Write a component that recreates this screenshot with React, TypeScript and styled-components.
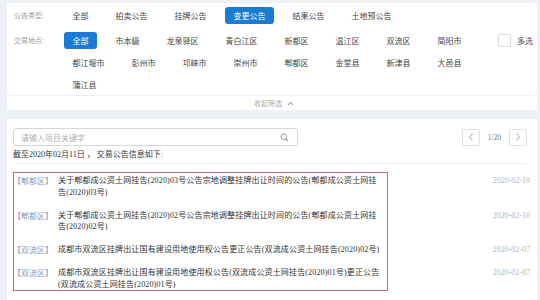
import React from 'react'
import styled, { createGlobalStyle } from 'styled-components'

const GlobalStyle = createGlobalStyle`
  body {
    margin: 0;
    background: #eef1f5;
    font-family: "Noto Sans CJK SC", sans-serif;
  }
`

const types = ['全部', '拍卖公告', '挂牌公告', '变更公告', '结果公告', '土地预公告']

const places = [
  '全部', '市本级', '龙泉驿区', '青白江区', '新都区', '温江区', '双流区', '简阳市',
  '都江堰市', '彭州市', '邛崃市', '崇州市', '郫都区', '金堂县', '新津县', '大邑县',
  '蒲江县',
]

const notices = [
  {
    area: '郫都区',
    lines: ['关于郫都成公资土网挂告(2020)03号公告宗地调整挂牌出让时间的公告(郫都成公资土网挂', '告(2020)03号)'],
    date: '2020-02-10',
  },
  {
    area: '郫都区',
    lines: ['关于郫都成公资土网挂告(2020)02号公告宗地调整挂牌出让时间的公告(郫都成公资土网挂', '告(2020)02号)'],
    date: '2020-02-10',
  },
  {
    area: '双流区',
    lines: ['成都市双流区挂牌出让国有建设用地使用权公告更正公告(双流成公资土网挂告(2020)02号)'],
    date: '2020-02-07',
  },
  {
    area: '双流区',
    lines: ['成都市双流区挂牌出让国有建设用地使用权公告(双流成公资土网挂告(2020)01号)更正公告', '(双流成公资土网挂告(2020)01号)'],
    date: '2020-02-07',
  },
]

export default function App() {
  return (
    <Page>
      <GlobalStyle />
      <FilterCard>
        <FilterBody>
          <FilterRow $gap={8}>
            <Label>公告类型:</Label>
            <Options>
              {types.map(t => (
                <Option key={t} $active={t === '变更公告'}>{t}</Option>
              ))}
            </Options>
          </FilterRow>
          <FilterRow>
            <Label>交易地点:</Label>
            <Options>
              {places.map((p, i) => (
                <Option key={p} $active={i === 0}>{p}</Option>
              ))}
            </Options>
            <MultiSelect>
              <CheckBox />
              多选
            </MultiSelect>
          </FilterRow>
        </FilterBody>
        <Toggle>
          收起筛选
          <svg width='7' height='5' viewBox='0 0 7 5'>
            <path d='M1 4 L3.5 1.5 L6 4' fill='none' stroke='#aaa' strokeWidth='1.2' />
          </svg>
        </Toggle>
      </FilterCard>

      <ListCard>
        <Toolbar>
          <SearchBox>
            <SearchInput placeholder='请输入项目关键字' />
            <svg width='9' height='9' viewBox='0 0 10 10'>
              <circle cx='4.2' cy='4.2' r='3.2' fill='none' stroke='#999' strokeWidth='1.1' />
              <path d='M6.6 6.6 L9 9' stroke='#999' strokeWidth='1.2' />
            </svg>
          </SearchBox>
          <Pager>
            <PageButton>
              <svg width='8' height='10' viewBox='0 0 8 10'>
                <path d='M5.5 1.5 L2.5 5 L5.5 8.5' fill='none' stroke='#c8c8c8' strokeWidth='1.3' />
              </svg>
            </PageButton>
            <PageText>1/20</PageText>
            <PageButton>
              <svg width='8' height='10' viewBox='0 0 8 10'>
                <path d='M2.5 1.5 L5.5 5 L2.5 8.5' fill='none' stroke='#c8c8c8' strokeWidth='1.3' />
              </svg>
            </PageButton>
          </Pager>
        </Toolbar>

        <Info>截至2020年02月11日 ， 交易公告信息如下:</Info>

        <List>
          {notices.map((n, i) => (
            <Row key={i}>
              <Tag>【{n.area}】</Tag>
              <Title>
                {n.lines.map((l, j) => (
                  <span key={j}>{l}</span>
                ))}
              </Title>
              <Date>{n.date}</Date>
            </Row>
          ))}
          <Highlight />
        </List>
      </ListCard>
    </Page>
  )
}

const Page = styled.div`
  padding: 3px 3px 0 7px;
`

const FilterCard = styled.section`
  background: #fff;
`

const FilterBody = styled.div`
  padding: 4px 0 2px 7px;
`

const FilterRow = styled.div<{ $gap?: number }>`
  display: flex;
  align-items: flex-start;
  margin-bottom: ${p => p.$gap ?? 0}px;
`

const Label = styled.div`
  width: 50px;
  flex: none;
  height: 17px;
  line-height: 17px;
  font-size: 7px;
  color: #a0a0a0;
`

const Options = styled.div`
  display: flex;
  flex-wrap: wrap;
  column-gap: 10px;
  row-gap: 5px;
  width: 426px;
  flex: none;
`

const Option = styled.span<{ $active?: boolean }>`
  height: 17px;
  line-height: 17px;
  padding: 0 8.5px;
  font-size: 8px;
  border-radius: 3px;
  color: ${p => (p.$active ? '#fff' : '#444')};
  background: ${p => (p.$active ? '#1a7bd4' : 'transparent')};
`

const MultiSelect = styled.label`
  display: flex;
  align-items: center;
  gap: 6px;
  height: 17px;
  margin-left: 8px;
  font-size: 8px;
  color: #555;
`

const CheckBox = styled.span`
  width: 13px;
  height: 13px;
  box-sizing: border-box;
  border: 1px solid #dcdcdc;
  border-radius: 2px;
  background: #fff;
`

const Toggle = styled.div`
  display: flex;
  align-items: center;
  justify-content: center;
  gap: 5px;
  height: 15px;
  box-sizing: border-box;
  border-top: 1px solid #eef0f3;
  padding-left: 4px;
  font-size: 7px;
  color: #aaa;
`

const ListCard = styled.section`
  margin-top: 9px;
  background: #fff;
  padding: 9px 10px 8px 6px;
`

const Toolbar = styled.div`
  display: flex;
  align-items: center;
  justify-content: space-between;
`

const SearchBox = styled.div`
  display: flex;
  align-items: center;
  width: 285px;
  height: 18px;
  box-sizing: border-box;
  border: 1px solid #d6d6d6;
  border-radius: 3px;
  padding: 0 8px 0 7px;
`

const SearchInput = styled.input`
  flex: 1;
  min-width: 0;
  border: none;
  outline: none;
  padding: 0;
  background: transparent;
  font-family: "Noto Sans CJK SC", sans-serif;
  font-size: 8px;
  color: #333;

  &::placeholder {
    color: #b0b0b0;
  }
`

const Pager = styled.div`
  display: flex;
  align-items: center;
  gap: 8px;
`

const PageButton = styled.span`
  display: flex;
  align-items: center;
  justify-content: center;
  width: 18px;
  height: 17px;
  box-sizing: border-box;
  border: 1px solid #e0e0e0;
  border-radius: 2px;
`

const PageText = styled.span`
  font-family: "Liberation Serif", serif;
  font-size: 7.5px;
  color: #777;
`

const Info = styled.div`
  margin-top: 3px;
  padding-bottom: 2px;
  border-bottom: 1px solid #f3f3f3;
  font-family: "Liberation Serif", "Noto Sans CJK SC", serif;
  font-size: 8px;
  line-height: 12px;
  color: #333;
`

const List = styled.div`
  position: relative;
  margin-top: 5.5px;
  margin-right: -3px;
`

const Row = styled.div`
  display: grid;
  grid-template-columns: 45px 1fr auto;
  padding: 5.75px 0;
  font-size: 8px;
  line-height: 11.5px;
`

const Tag = styled.span`
  color: #8f9bb3;
  font-family: "Noto Sans CJK SC", sans-serif;
`

const Title = styled.div`
  color: #333;
  font-family: "Liberation Serif", "Noto Sans CJK SC", serif;
  white-space: nowrap;
  letter-spacing: 0.15px;

  span {
    display: block;
  }
`

const Date = styled.span`
  color: #b5b5b5;
  font-family: "Liberation Serif", serif;
`

const Highlight = styled.div`
  position: absolute;
  left: 0;
  top: 2.5px;
  width: 375px;
  height: 119px;
  box-sizing: border-box;
  border: 1px solid #b8707a;
  pointer-events: none;
`
